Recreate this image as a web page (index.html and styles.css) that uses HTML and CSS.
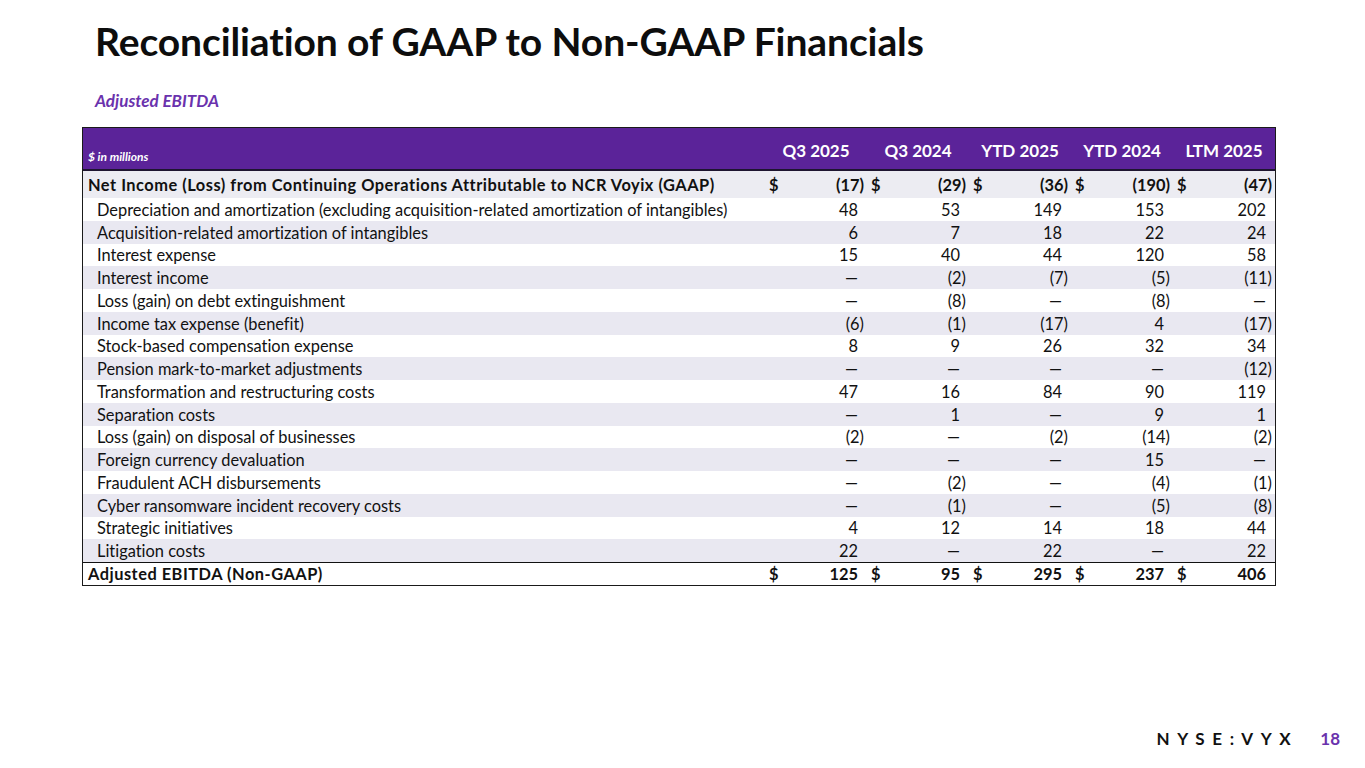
FILE: index.html
```html
<!DOCTYPE html>
<html lang="en">
<head>
<meta charset="utf-8">
<title>Reconciliation of GAAP to Non-GAAP Financials</title>
<link rel="stylesheet" href="styles.css">
</head>
<body>
<div class="slide">
  <h1 class="title">Reconciliation of GAAP to Non-GAAP Financials</h1>
  <div class="subtitle">Adjusted EBITDA</div>
  <div class="table">
    <div class="row head">
      <div class="label unit">$ in millions</div>
      <div class="hc">Q3 2025</div><div class="hc">Q3 2024</div><div class="hc">YTD 2025</div><div class="hc">YTD 2024</div><div class="hc">LTM 2025</div>
    </div>
    <div class="row total first">
      <div class="label">Net Income (Loss) from Continuing Operations Attributable to NCR Voyix (GAAP)</div>
      <div class="v"><span>$</span><span>(17)</span></div>
      <div class="v"><span>$</span><span>(29)</span></div>
      <div class="v"><span>$</span><span>(36)</span></div>
      <div class="v"><span>$</span><span>(190)</span></div>
      <div class="v"><span>$</span><span>(47)</span></div>
    </div>
    <div class="row">
      <div class="label sub">Depreciation and amortization (excluding acquisition-related amortization of intangibles)</div>
      <div class="v p">48</div><div class="v p">53</div><div class="v p">149</div><div class="v p">153</div><div class="v p">202</div>
    </div>
    <div class="row alt">
      <div class="label sub">Acquisition-related amortization of intangibles</div>
      <div class="v p">6</div><div class="v p">7</div><div class="v p">18</div><div class="v p">22</div><div class="v p">24</div>
    </div>
    <div class="row">
      <div class="label sub">Interest expense</div>
      <div class="v p">15</div><div class="v p">40</div><div class="v p">44</div><div class="v p">120</div><div class="v p">58</div>
    </div>
    <div class="row alt">
      <div class="label sub">Interest income</div>
      <div class="v p">—</div><div class="v">(2)</div><div class="v">(7)</div><div class="v">(5)</div><div class="v">(11)</div>
    </div>
    <div class="row">
      <div class="label sub">Loss (gain) on debt extinguishment</div>
      <div class="v p">—</div><div class="v">(8)</div><div class="v p">—</div><div class="v">(8)</div><div class="v p">—</div>
    </div>
    <div class="row alt">
      <div class="label sub">Income tax expense (benefit)</div>
      <div class="v">(6)</div><div class="v">(1)</div><div class="v">(17)</div><div class="v p">4</div><div class="v">(17)</div>
    </div>
    <div class="row">
      <div class="label sub">Stock-based compensation expense</div>
      <div class="v p">8</div><div class="v p">9</div><div class="v p">26</div><div class="v p">32</div><div class="v p">34</div>
    </div>
    <div class="row alt">
      <div class="label sub">Pension mark-to-market adjustments</div>
      <div class="v p">—</div><div class="v p">—</div><div class="v p">—</div><div class="v p">—</div><div class="v">(12)</div>
    </div>
    <div class="row">
      <div class="label sub">Transformation and restructuring costs</div>
      <div class="v p">47</div><div class="v p">16</div><div class="v p">84</div><div class="v p">90</div><div class="v p">119</div>
    </div>
    <div class="row alt">
      <div class="label sub">Separation costs</div>
      <div class="v p">—</div><div class="v p">1</div><div class="v p">—</div><div class="v p">9</div><div class="v p">1</div>
    </div>
    <div class="row">
      <div class="label sub">Loss (gain) on disposal of businesses</div>
      <div class="v">(2)</div><div class="v p">—</div><div class="v">(2)</div><div class="v">(14)</div><div class="v">(2)</div>
    </div>
    <div class="row alt">
      <div class="label sub">Foreign currency devaluation</div>
      <div class="v p">—</div><div class="v p">—</div><div class="v p">—</div><div class="v p">15</div><div class="v p">—</div>
    </div>
    <div class="row">
      <div class="label sub">Fraudulent ACH disbursements</div>
      <div class="v p">—</div><div class="v">(2)</div><div class="v p">—</div><div class="v">(4)</div><div class="v">(1)</div>
    </div>
    <div class="row alt">
      <div class="label sub">Cyber ransomware incident recovery costs</div>
      <div class="v p">—</div><div class="v">(1)</div><div class="v p">—</div><div class="v">(5)</div><div class="v">(8)</div>
    </div>
    <div class="row">
      <div class="label sub">Strategic initiatives</div>
      <div class="v p">4</div><div class="v p">12</div><div class="v p">14</div><div class="v p">18</div><div class="v p">44</div>
    </div>
    <div class="row alt">
      <div class="label sub">Litigation costs</div>
      <div class="v p">22</div><div class="v p">—</div><div class="v p">22</div><div class="v p">—</div><div class="v p">22</div>
    </div>
    <div class="row total last">
      <div class="label">Adjusted EBITDA (Non-GAAP)</div>
      <div class="v p"><span>$</span><span>125</span></div>
      <div class="v p"><span>$</span><span>95</span></div>
      <div class="v p"><span>$</span><span>295</span></div>
      <div class="v p"><span>$</span><span>237</span></div>
      <div class="v p"><span>$</span><span>406</span></div>
    </div>
  </div>
  <footer class="footer">
    <span class="ticker">NYSE:VYX</span>
    <span class="page">18</span>
  </footer>
</div>
</body>
</html>
```

FILE: styles.css
```css
html, body {
  margin: 0;
  padding: 0;
  background: #ffffff;
}

.slide {
  width: 1365px;
  height: 768px;
  display: flex;
  flex-direction: column;
  font-family: "Lato", "Noto Sans", sans-serif;
  font-variant-ligatures: none;
  color: #111111;
  overflow: hidden;
}

.title {
  margin: 17px 0 0 95px;
  font-size: 39px;
  font-weight: 700;
  line-height: 48px;
  letter-spacing: -0.1px;
  color: #0d0d0d;
}

.subtitle {
  margin: 26px 0 0 95px;
  font-size: 17px;
  font-weight: 700;
  font-style: italic;
  color: #6a32ad;
  line-height: 20px;
}

.table {
  margin: 16px 0 0 82px;
  width: 1194px;
  border: 1px solid #1a1a1a;
  box-sizing: border-box;
}

.row {
  display: grid;
  grid-template-columns: 1fr repeat(5, 102px);
  height: 22.75px;
  align-items: center;
  font-size: 16.4px;
  background: #ffffff;
}

.row.alt {
  background: #e9e8f1;
}

.row.head {
  height: 41px;
  background: #5b2399;
  color: #ffffff;
  align-items: end;
  border-bottom: 2px solid #1e1530;
}

.unit {
  font-size: 12px;
  font-style: italic;
  font-weight: 700;
  padding: 0 0 5px 5px;
}

.hc {
  text-align: center;
  font-weight: 700;
  font-size: 17px;
  padding-bottom: 8px;
}

.label {
  white-space: nowrap;
  padding-left: 5px;
}

.label.sub {
  padding-left: 14px;
}

.row.total {
  font-weight: 700;
}

.row.total .label {
  letter-spacing: 0.5px;
}

.row.first {
  height: 27px;
  background: #ececf2;
}

.row.last {
  height: 21.5px;
  border-top: 1.5px solid #111111;
}

.v {
  display: flex;
  justify-content: flex-end;
  padding-right: 3px;
}

.v span:first-child {
  margin-right: auto;
  padding-left: 4px;
}

.v.p {
  padding-right: 9px;
}

.footer {
  margin-top: auto;
  display: flex;
  justify-content: flex-end;
  align-items: center;
  gap: 22px;
  padding: 0 25px 19px 0;
}

.ticker {
  font-size: 17px;
  font-weight: 700;
  letter-spacing: 7.6px;
  color: #111111;
}

.page {
  font-size: 17px;
  font-weight: 700;
  color: #6a32ad;
}
```
